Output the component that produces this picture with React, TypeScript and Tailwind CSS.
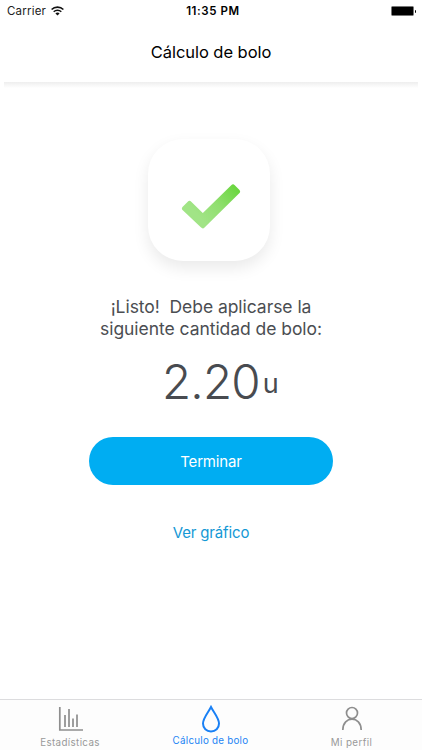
import React from "react";

function WifiIcon() {
  return (
    <svg width="13" height="10" viewBox="0 0 13 10" fill="none" className="mb-px shrink-0">
      <path d="M0.6 3.500C3.800 0.300 9.200 0.300 12.400 3.500" stroke="#111" strokeWidth="1.6" />
      <path d="M2.700 5.700C4.800 3.700 8.200 3.700 10.300 5.700" stroke="#111" strokeWidth="1.5" />
      <path d="M4.400 7.400C5.600 6.300 7.400 6.300 8.600 7.400L6.500 9.600Z" fill="#111" />
    </svg>
  );
}

function StatusBar() {
  return (
    <div className="grid h-[22px] grid-cols-3 items-center pl-[7px] pr-[6px] text-black">
      <div className="flex items-center gap-[5px]">
        <span className="text-[11.5px] leading-[22px] tracking-[0.2px] text-[#222]">Carrier</span>
        <WifiIcon />
      </div>
      <span className="pl-[3px] text-center text-[11.5px] font-semibold leading-[22px] tracking-[0.6px]">11:35 PM</span>
      <div className="flex items-center justify-end gap-px">
        <div className="h-[10px] w-[23px] rounded-[1.5px] border border-[#777] bg-black" />
        <div className="h-[3px] w-px rounded-r bg-black" />
      </div>
    </div>
  );
}

function CheckCard() {
  return (
    <div className="ml-[148px] mt-[51px] flex h-[122px] w-[122px] items-center justify-center rounded-[35px] bg-white shadow-[0_7px_16px_rgba(0,0,0,0.085)]">
      <svg width="60" height="48" viewBox="0 0 60 48" className="ml-[3px] mt-[13px]">
        <defs>
          <linearGradient id="check" x1="20" y1="36" x2="56" y2="4" gradientUnits="userSpaceOnUse">
            <stop offset="0" stopColor="#a1e486" />
            <stop offset="0.45" stopColor="#91df70" />
            <stop offset="1" stopColor="#69d63e" />
          </linearGradient>
        </defs>
        <path d="M3.500 25.500L8.500 20.500L21.800 33.500L52 4L56.500 8.500L21.800 42.800Z" fill="url(#check)" stroke="url(#check)" strokeWidth="5" strokeLinejoin="round" />
      </svg>
    </div>
  );
}

function TabBar() {
  return (
    <nav className="grid h-[51px] grid-cols-[140px_141px_141px] border-t border-[#dcdcde] bg-[#fdfdfd] text-[9.8px] leading-[14px] text-[#999]">
      <div className="flex flex-col items-center pt-[6px]">
        <svg width="26" height="26" viewBox="0 0 26 26" fill="none" stroke="#8e8e8e" strokeWidth="1.7" className="ml-[2px]">
          <path d="M1.8 1v23H25" />
          <path d="M7 9v12M11 3v18M15 12.500v8.500M19 8.500v12.500" />
        </svg>
        <span className="mt-[4px] tracking-[0.36px]">Estadísticas</span>
      </div>
      <div className="flex flex-col items-center pt-[5px] text-[#2384f4]">
        <svg width="22" height="28" viewBox="0 0 22 28" fill="none" stroke="#1980f5" strokeWidth="2">
          <path d="M11 2C8.500 7 3 13 3 18.500C3 23.300 6.500 26.500 11 26.500S19 23.300 19 18.500C19 13 13.500 7 11 2Z" />
        </svg>
        <span className="mt-px tracking-[0.25px]">Cálculo de bolo</span>
      </div>
      <div className="flex flex-col items-center pt-[6px]">
        <svg width="22" height="26" viewBox="0 0 22 26" fill="none" stroke="#8e8e8e" strokeWidth="1.7">
          <circle cx="11" cy="7" r="5.500" />
          <path d="M1.800 24C1.800 9.500 20.200 9.500 20.200 24" />
        </svg>
        <span className="mt-[4px] tracking-[0.4px]">Mi perfil</span>
      </div>
    </nav>
  );
}

export default function App() {
  return (
    <div className="flex h-[750px] w-[422px] flex-col overflow-hidden bg-white font-['Inter','Liberation_Sans',sans-serif]">
      <StatusBar />
      <header className="flex h-[60px] items-center justify-center">
        <h1 className="text-[16.5px] font-normal leading-6 tracking-[-0.05px] text-black">Cálculo de bolo</h1>
      </header>
      <div className="mx-1 h-[6px] bg-linear-to-b from-[#eeeeee] to-white" />
      <main className="flex flex-1 flex-col">
        <CheckCard />
        <p className="mt-[35px] whitespace-pre text-center text-[17.5px] leading-[22px] tracking-[-0.05px] text-[#4b4e52]">
          {"¡Listo!  Debe aplicarse la\nsiguiente cantidad de bolo:"}
        </p>
        <div className="ml-[162px] mt-[12px] flex h-[60px] items-start text-[#484b50]">
          <span className="text-[47.5px] font-light leading-[60px] tracking-[-0.8px]">2.20</span>
          <span className="ml-[3px] mt-[14px] text-[27px] leading-[36px]">u</span>
        </div>
        <button className="ml-[89px] mt-[25px] h-[48px] w-[244px] rounded-full bg-[#00adf2] pt-[2px] text-[15px] tracking-[-0.15px] text-white">Terminar</button>
        <a className="mt-[36px] text-center text-[15px] leading-6 tracking-[-0.15px] text-[#1498d5]">Ver gráfico</a>
      </main>
      <TabBar />
    </div>
  );
}
